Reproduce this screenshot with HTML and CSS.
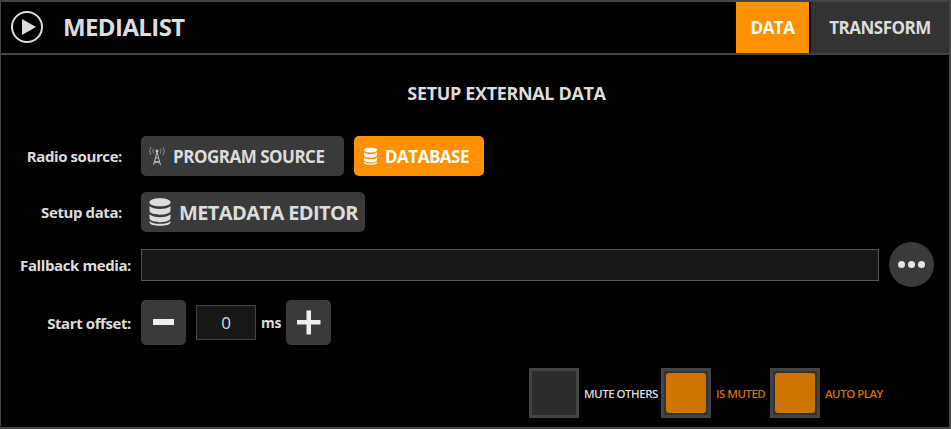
FILE: index.html
```html
<!DOCTYPE html>
<html lang="en">
<head>
<meta charset="utf-8">
<title>Medialist</title>
<link rel="stylesheet" href="styles.css">
</head>
<body>
<div class="panel">
  <header class="header">
    <svg class="logo" viewBox="0 0 32 32" width="32" height="32"><circle cx="16" cy="16" r="15" fill="none" stroke="#ddd" stroke-width="2"/><path d="M11 8 L25 16 L11 24 Z" fill="#ddd"/></svg>
    <h1 class="title">MEDIALIST</h1>
    <nav class="tabs">
      <div class="tab tab-data">DATA</div>
      <div class="tab tab-transform">TRANSFORM</div>
    </nav>
  </header>
  <main class="body">
    <h2 class="heading">SETUP EXTERNAL DATA</h2>
    <div class="row row-radio">
      <div class="label label-short">Radio source:</div>
      <div class="btn btn-program">
        <svg class="ico-radio" viewBox="0 0 18 20" width="18" height="20" fill="none" stroke="#bbb" stroke-width="1"><circle cx="9" cy="5" r="1.5" fill="#ccc" stroke="none"/><path d="M9 6 L5.5 19 M9 6 L12.5 19 M7.4 12 H10.6 M6.6 15 L11.8 17 M11.4 15 L6.2 17"/><path d="M5.8 2.5 A4 4 0 0 0 5.8 7.5 M12.2 2.5 A4 4 0 0 1 12.2 7.5 M3 1 A7 7 0 0 0 3 9 M15 1 A7 7 0 0 1 15 9" stroke="#888"/></svg>
        <span>PROGRAM SOURCE</span>
      </div>
      <div class="btn btn-database">
        <svg viewBox="0 0 16 20" width="15" height="20" fill="#fff"><path d="M1 3.5C1 1.8 4.2 .8 8 .8s7 1 7 2.7S11.800 6.200 8 6.200 1 5.200 1 3.500Z"/><path d="M1 6c1.200 1.400 4 2 7 2s5.800-.6 7-2v3c0 1.700-3.200 2.800-7 2.800S1 10.700 1 9Z"/><path d="M1 11.500c1.200 1.400 4 2 7 2s5.800-.6 7-2v2.500c0 1.700-3.200 2.800-7 2.800S1 15.700 1 14Z"/><path d="M1 16c1.200 1.300 4 1.900 7 1.900s5.800-.6 7-1.900v.8c0 1.500-3.200 2.400-7 2.400s-7-.9-7-2.400Z"/></svg>
        <span>DATABASE</span>
      </div>
    </div>
    <div class="row row-setup">
      <div class="label label-short">Setup data:</div>
      <div class="btn btn-meta">
        <svg viewBox="0 0 16 20" width="24" height="30" fill="#ddd"><path d="M1 3.500C1 1.800 4.200 .8 8 .8s7 1 7 2.700S11.800 6.200 8 6.200 1 5.200 1 3.500Z"/><path d="M1 6c1.200 1.400 4 2 7 2s5.800-.6 7-2v3c0 1.700-3.200 2.800-7 2.800S1 10.700 1 9Z"/><path d="M1 11.500c1.200 1.400 4 2 7 2s5.800-.6 7-2v2.500c0 1.700-3.200 2.800-7 2.800S1 15.700 1 14Z"/><path d="M1 16c1.200 1.300 4 1.900 7 1.900s5.800-.6 7-1.900v.8c0 1.500-3.200 2.400-7 2.400s-7-.9-7-2.400Z"/></svg>
        <span>METADATA EDITOR</span>
      </div>
    </div>
    <div class="row row-fallback">
      <div class="label">Fallback media:</div>
      <div class="field"></div>
      <div class="more"><i></i><i></i><i></i></div>
    </div>
    <div class="row row-offset">
      <div class="label">Start offset:</div>
      <div class="square"><svg viewBox="0 0 45 45" width="45" height="45"><rect x="12" y="19" width="21" height="6" fill="#eee"/></svg></div>
      <div class="num">0</div>
      <div class="unit">ms</div>
      <div class="square"><svg viewBox="0 0 45 45" width="45" height="45"><path d="M11 20h9.500v-9.500h4.500v9.500h9.500v4.500h-9.500v10h-4.500v-10h-9.500Z" fill="#eee"/></svg></div>
    </div>
    <div class="toggles">
      <div class="box"></div>
      <div class="cap cap-off">MUTE OTHERS</div>
      <div class="box"><div class="fill"></div></div>
      <div class="cap cap-on cap-muted">IS MUTED</div>
      <div class="box"><div class="fill"></div></div>
      <div class="cap cap-on">AUTO PLAY</div>
    </div>
  </main>
</div>
</body>
</html>
```
FILE: styles.css
```css
* { box-sizing: border-box; margin: 0; padding: 0; }
html, body { width: 951px; height: 429px; overflow: hidden; background: #000; }
body { font-family: "Open Sans", "Noto Sans", sans-serif; font-weight: 700; color: #ddd; }
.panel { width: 951px; height: 429px; border: 2px solid #444; border-left-width: 1px; display: flex; flex-direction: column; }
.header { height: 53px; flex: none; border-bottom: 2px solid #444; display: flex; align-items: center; padding-left: 10px; }
.logo { flex: none; margin-top: -2px; }
.title { font-size: 24px; font-weight: 700; color: #ddd; margin-left: 20px; letter-spacing: -0.6px; margin-top: -2px; }
.tabs { margin-left: auto; display: flex; height: 51px; gap: 2px; }
.tab { display: flex; align-items: center; justify-content: center; font-size: 17px; letter-spacing: -0.5px; }
.tab-data { width: 73px; background: #ff9000; color: #fff; }
.tab-transform { width: 138px; background: #333; color: #ddd; }
.body { flex: 1; display: flex; flex-direction: column; }
.heading { font-size: 18px; font-weight: 700; color: #ddd; text-align: center; padding-left: 63px; margin-top: 26px; height: 25px; line-height: 25px; letter-spacing: -0.35px; }
.row { display: flex; align-items: center; padding-right: 15px; }
.row-radio { margin-top: 30px; height: 40px; gap: 10px; }
.row-setup { margin-top: 16px; height: 40px; }
.row-fallback { margin-top: 10px; height: 45px; gap: 10px; }
.row-offset { margin-top: 13px; height: 45px; gap: 10px; }
.label { width: 130px; flex: none; text-align: right; font-size: 15px; letter-spacing: -0.4px; color: #ddd; margin-right: 0; white-space: nowrap; }
.label-short { padding-right: 9px; }
.row-setup .label { margin-right: 10px; }
.btn { height: 40px; border-radius: 5px; display: flex; align-items: center; white-space: nowrap; }
.btn-program { width: 203px; background: #3a3a3a; color: #ddd; font-size: 17px; letter-spacing: -0.5px; padding-left: 7px; gap: 7px; }
.btn-database { width: 130px; background: #ff9000; color: #fff; font-size: 17px; letter-spacing: -0.5px; padding-left: 9px; gap: 7px; }
.btn-meta { width: 224px; background: #3a3a3a; color: #ddd; font-size: 20px; letter-spacing: -0.6px; padding-left: 7px; gap: 7px; }
.field { width: 738px; height: 32px; background: #171717; border: 1px solid #555; }
.more { width: 45px; height: 45px; border-radius: 50%; background: #3a3a3a; display: flex; align-items: center; justify-content: center; gap: 3px; }
.more i { width: 7px; height: 7px; border-radius: 50%; background: #e4e4e4; display: block; }
.square { width: 45px; height: 45px; border-radius: 5px; background: #3a3a3a; flex: none; }
.square svg { display: block; }
.num { width: 60px; height: 35px; background: #171717; border: 1px solid #444; display: flex; align-items: center; justify-content: center; font-size: 17px; font-weight: 400; color: #ddd; }
.unit { font-size: 14px; color: #ddd; margin-left: -5px; margin-right: -5px; width: 20px; letter-spacing: -0.3px; }
.toggles { display: flex; align-items: center; margin-top: 23px; padding-left: 528px; height: 50px; }
.box { width: 50px; height: 50px; background: #2d2d2d; border: 3px solid #444; flex: none; padding: 2px; }
.box .fill { width: 40px; height: 40px; border-radius: 3px; background: #d07400; }
.cap { font-size: 11.5px; font-weight: 600; letter-spacing: -0.5px; margin-left: 5px; white-space: nowrap; }
.cap-off { color: #ddd; width: 77px; }
.cap-on { color: #d07000; }
.cap-muted { width: 54px; margin-left: 5px; }
.box:has(.fill) { background: #333; }
```
